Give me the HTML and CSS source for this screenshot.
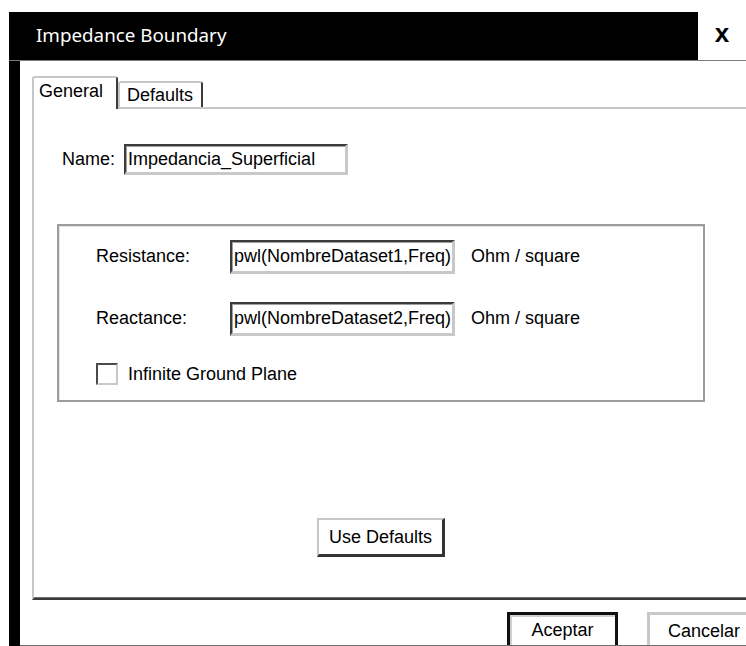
FILE: index.html
```html
<!DOCTYPE html>
<html lang="es">
<head>
<meta charset="utf-8">
<title>Impedance Boundary</title>
<link rel="stylesheet" href="styles.css">
</head>
<body>
<div class="window">
  <div class="titlebar">
    <div class="title">Impedance Boundary</div>
    <div class="close">x</div>
  </div>
  <div class="frame">
    <div class="frame-edge"></div>
    <div class="client">
      <div class="tabs">
        <div class="tab tab-active">General</div>
        <div class="tab">Defaults</div>
      </div>
      <div class="panel">
        <div class="name-row">
          <span class="label">Name:</span>
          <div class="field field-name">Impedancia_Superficial</div>
        </div>
        <div class="group">
          <div class="row">
            <span class="label label-col">Resistance:</span>
            <div class="field field-value">pwl(NombreDataset1,Freq)</div>
            <span class="label unit">Ohm / square</span>
          </div>
          <div class="row">
            <span class="label label-col">Reactance:</span>
            <div class="field field-value">pwl(NombreDataset2,Freq)</div>
            <span class="label unit">Ohm / square</span>
          </div>
          <div class="check-row">
            <span class="checkbox"></span>
            <span class="label">Infinite Ground Plane</span>
          </div>
        </div>
        <div class="defaults-row">
          <div class="button button-raised">Use Defaults</div>
        </div>
      </div>
      <div class="footer">
        <div class="button button-default">Aceptar</div>
        <div class="button button-cancel">Cancelar</div>
      </div>
    </div>
  </div>
</div>
</body>
</html>
```
FILE: styles.css
```css
html, body {
  margin: 0;
  padding: 0;
  background: #ffffff;
  overflow: hidden;
}

body {
  width: 746px;
  height: 646px;
  font-family: "Liberation Sans", Arial, sans-serif;
  font-size: 18px;
  color: #000000;
}

.window {
  margin: 12px 0 0 9px;
  height: 634px;
  display: flex;
  flex-direction: column;
  overflow: hidden;
}

/* caption bar */
.titlebar {
  height: 48px;
  flex: none;
  display: flex;
  background: #000000;
  border-bottom: 1px solid #7a7a7a;
}

.title {
  flex: 1;
  padding-left: 27px;
  line-height: 47px;
  color: #ffffff;
  font-family: "Noto Sans", "Open Sans", sans-serif;
  font-size: 18.8px;
}

.close {
  width: 48px;
  background: #ffffff;
  text-align: center;
  font-family: "Liberation Sans", Arial, sans-serif;
  font-weight: bold;
  font-size: 26px;
  line-height: 42px;
}

.frame {
  flex: 1;
  display: flex;
  min-height: 0;
}

.frame-edge {
  width: 11px;
  flex: none;
  background: #000000;
}

.client {
  flex: 1;
  display: flex;
  flex-direction: column;
  padding-left: 12px;
  border-bottom: 1px solid #6e6e6e;
  min-width: 0;
}

/* tab strip */
.tabs {
  margin-top: 15px;
  height: 31px;
  flex: none;
  display: flex;
  align-items: flex-end;
  position: relative;
  z-index: 1;
}

.tab {
  box-sizing: border-box;
  height: 26px;
  padding: 0 7px;
  line-height: 24px;
  border-top: 2px solid #c6c6c6;
  border-left: 2px solid #c6c6c6;
  border-right: 2px solid #3a3a3a;
  border-radius: 3px 3px 0 0;
  background: #ffffff;
}

.tab-active {
  height: 33px;
  margin-bottom: -2px;
  width: 86px;
  padding: 0 5px;
  line-height: 27px;
}

.tab + .tab {
  width: 85px;
}

/* tab page */
.panel {
  box-sizing: border-box;
  height: 493px;
  flex: none;
  margin-right: -40px;
  padding: 35px 0 0 23px;
  border-top: 2px solid #c6c6c6;
  border-left: 2px solid #c6c6c6;
  border-bottom: 2px solid #3a3a3a;
  box-shadow: 0 -1px 0 #6e6e6e inset;
}

.name-row {
  display: flex;
  align-items: center;
  height: 31px;
  padding-left: 5px;
}

.field {
  box-sizing: border-box;
  height: 32px;
  padding: 0 2px;
  line-height: 27px;
  white-space: nowrap;
  overflow: hidden;
  border-top: 2px solid #3c3c3c;
  border-left: 2px solid #3c3c3c;
  border-right: 3px solid #c8c8c8;
  border-bottom: 3px solid #c8c8c8;
  box-shadow: inset 1px 1px 0 #a0a0a0;
}

.field-name {
  margin-left: 9px;
  width: 224px;
  height: 31px;
}

.field-value {
  width: 225px;
  height: 34px;
  line-height: 29px;
}

/* grouped settings */
.group {
  box-sizing: border-box;
  width: 648px;
  height: 178px;
  margin-top: 49px;
  padding: 13px 0 0 37px;
  border: 2px solid #9c9c9c;
  box-shadow: inset 1px 1px 0 #e2e2e2;
}

.row {
  display: flex;
  align-items: center;
  height: 35px;
  margin-bottom: 27px;
}

.label-col {
  width: 134px;
  flex: none;
}

.unit {
  margin-left: 16px;
}

.check-row {
  display: flex;
  align-items: center;
  height: 22px;
}

.checkbox {
  box-sizing: border-box;
  width: 22px;
  height: 22px;
  margin-right: 10px;
  border-top: 2px solid #4a4a4a;
  border-left: 2px solid #4a4a4a;
  border-right: 2px solid #c8c8c8;
  border-bottom: 2px solid #c8c8c8;
  background: #ffffff;
}

.defaults-row {
  width: 648px;
  margin-top: 116px;
  display: flex;
  justify-content: center;
}

/* push buttons */
.button {
  box-sizing: border-box;
  height: 39px;
  text-align: center;
  background: #ffffff;
}

.button-raised {
  width: 128px;
  line-height: 34px;
  border-top: 2px solid #c8c8c8;
  border-left: 2px solid #c8c8c8;
  border-right: 3px solid #333333;
  border-bottom: 3px solid #333333;
}

.footer {
  flex: 1;
  display: flex;
  padding: 12px 0 0 475px;
  gap: 29px;
  overflow: hidden;
  min-height: 0;
}

.button-default {
  width: 111px;
  height: 40px;
  flex: none;
  line-height: 30px;
  border: 3px solid #111111;
  box-shadow: inset 2px 2px 0 #cfcfcf;
}

.button-cancel {
  width: 111px;
  height: 40px;
  flex: none;
  line-height: 32px;
  border-top: 3px solid #c8c8c8;
  border-left: 3px solid #c8c8c8;
}
```
